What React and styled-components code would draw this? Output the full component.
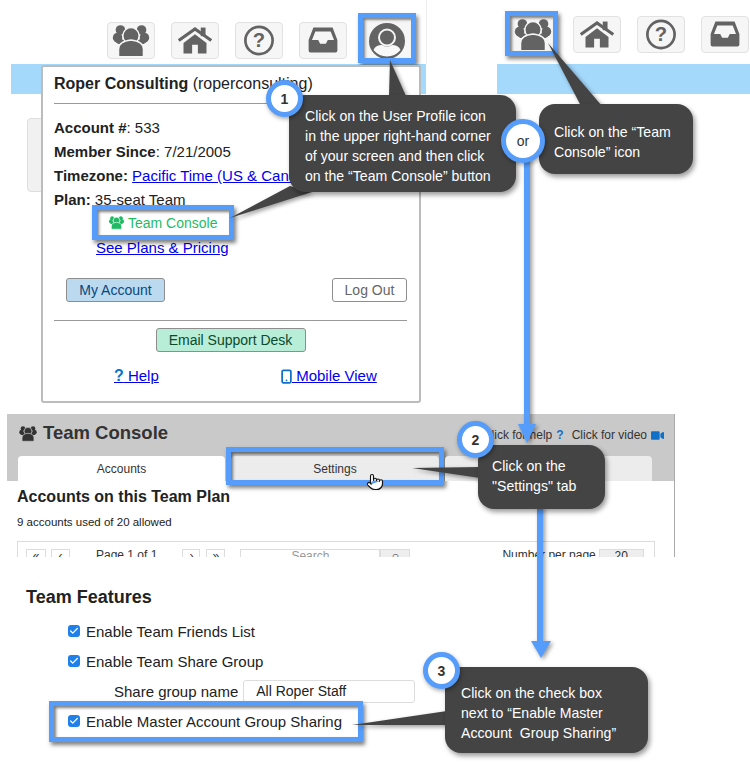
import React from "react";
import styled, { createGlobalStyle } from "styled-components";
import { FaVideo } from "react-icons/fa";
import { Smartphone, Check, Pointer } from "lucide-react";

const BLUE = "#559cfb";
const DARK = "#444444";
const ICON = "#636363";

const Global = createGlobalStyle`
  html, body { margin: 0; padding: 0; background: #fff; }
  body { font-family: "Liberation Sans", Arial, sans-serif; color: #222; }
`;

const Canvas = styled.div`
  position: relative;
  width: 750px;
  height: 764px;
  overflow: hidden;
  background: #fff;
`;
const TopRow = styled.div`
  display: grid;
  grid-template-columns: 497px 253px;
  height: 414px;
`;
const LeftScreen = styled.div`
  position: relative;
`;
const RightScreen = styled.div``;
const Toolbar = styled.div`
  display: flex;
  gap: 16px;
  box-sizing: border-box;
  height: 64px;
  width: ${(p) => p.$width};
  padding: ${(p) => p.$padding};
  border-right: ${(p) => (p.$edge ? "1px solid #ececec" : "none")};
`;
const IconButton = styled.div`
  position: relative;
  box-sizing: border-box;
  width: 48px;
  height: 37px;
  display: flex;
  align-items: center;
  justify-content: center;
  background: #f6f6f6;
  border: 1px solid ${(p) => (p.$plain ? "transparent" : "#e2e2e2")};
  border-radius: 4px;
`;
const Ring = styled.div`
  position: absolute;
  inset: ${(p) => p.$inset};
  border: 5px solid ${BLUE};
  box-shadow: 2px 3px 4px rgba(0, 0, 0, 0.5), inset 2px 2px 3px rgba(0, 0, 0, 0.5);
  pointer-events: none;
`;
const Bar = styled.div`
  height: 30px;
  margin-left: ${(p) => p.$left};
  width: ${(p) => p.$width};
  background: #a4d9fc;
`;
const GhostTab = styled.div`
  box-sizing: border-box;
  width: 40px;
  height: 74px;
  margin: 24px 0 0 27px;
  background: #f1f1f1;
  border: 1px solid #dedede;
  border-radius: 4px;
`;
const Popup = styled.div`
  position: absolute;
  left: 41px;
  top: 65px;
  box-sizing: border-box;
  width: 380px;
  height: 338px;
  padding: 7px 12px 0 11px;
  background: #fff;
  border: 2px solid #bcbcbc;
  border-radius: 3px;
  font-size: 15px;
`;
const PopupTitle = styled.div`
  font-size: 16px;
  line-height: 20px;
  white-space: nowrap;
  b { font-weight: 700; }
`;
const Rule = styled.hr`
  margin: ${(p) => p.$margin};
  border: 0;
  border-top: 1px solid #999;
  height: 0;
`;
const InfoRow = styled.div`
  line-height: 24px;
  white-space: nowrap;
  b { font-weight: 700; }
`;
const Link = styled.a`
  color: #0000ee;
  text-decoration: underline;
`;
const ConsoleButton = styled.div`
  position: relative;
  box-sizing: border-box;
  width: 132px;
  height: 25px;
  margin: -2px 0 0 43px;
  display: flex;
  align-items: center;
  gap: 2px;
  padding-left: 10px;
  background: #fff;
  color: #1fbb64;
  font-size: 14px;
`;
const PlansRow = styled.div`
  line-height: 24px;
  margin: 1px 0 0 42px;
`;
const ActionRow = styled.div`
  display: flex;
  justify-content: space-between;
  margin: 18px 0 0 12px;
`;
const ActionButton = styled.div`
  box-sizing: border-box;
  height: 24px;
  width: ${(p) => p.$width};
  display: flex;
  align-items: center;
  justify-content: center;
  border: 1px solid #8e8e8e;
  border-radius: 3px;
  background: ${(p) => p.$bg};
  color: ${(p) => p.$color};
  font-size: 14px;
`;
const SupportRow = styled.div`
  display: flex;
  justify-content: center;
`;
const LinkRow = styled.div`
  display: flex;
  margin: 12px 0 0 60px;
  line-height: 24px;
`;
const HelpLink = styled(Link)`
  width: 168px;
  flex: none;
  display: block;
  white-space: pre;
`;
const MobileLink = styled(Link)`
  display: flex;
  align-items: center;
  white-space: pre;
  svg { margin: 0 -2px 0 -3px; }
`;
const HelpMark = styled.b`
  color: #1070c8;
  font-size: 16px;
`;
const Console = styled.div`
  box-sizing: border-box;
  width: 668px;
  height: 143px;
  margin-left: 7px;
  border-right: 1px solid #aaa;
  overflow: hidden;
`;
const ConsoleHead = styled.div`
  height: 67px;
  background: #c9c9c9;
  padding-left: 10px;
  box-sizing: border-box;
`;
const HeadLine = styled.div`
  box-sizing: border-box;
  display: flex;
  align-items: center;
  height: 42px;
  padding: 0 10px 4px 0;
  gap: 4px;
`;
const ConsoleTitle = styled.div`
  font-size: 18.5px;
  font-weight: 700;
  color: #333;
`;
const HeadLinks = styled.div`
  margin-left: auto;
  display: flex;
  align-items: center;
  gap: 4px;
  font-size: 12px;
  color: #333;
  padding-top: 4px;
`;
const HeadQ = styled.b`
  color: #1070c8;
  margin-right: 4px;
  font-size: 12px;
`;
const Tabs = styled.div`
  display: flex;
  gap: 6px;
  margin-left: 1px;
`;
const Tab = styled.div`
  position: relative;
  box-sizing: border-box;
  width: ${(p) => p.$width};
  height: 25px;
  display: flex;
  align-items: center;
  justify-content: center;
  background: ${(p) => (p.$active ? "#fff" : "#ececec")};
  border-radius: 4px 4px 0 0;
  font-size: 12px;
  color: #333;
`;
const Cursor = styled.div`
  position: absolute;
  right: 55px;
  top: 17px;
  line-height: 0;
`;
const ConsoleBody = styled.div`
  padding: 7px 0 0 10px;
  background: #fff;
`;
const BodyTitle = styled.div`
  font-size: 16px;
  line-height: 18px;
  font-weight: 700;
  color: #222;
`;
const BodyNote = styled.div`
  font-size: 11.5px;
  line-height: 14px;
  margin-top: 9px;
  color: #222;
`;
const Pager = styled.div`
  box-sizing: border-box;
  width: 638px;
  height: 30px;
  margin-top: 12px;
  padding: 7px 8px 0;
  border: 1px solid #dcdcdc;
  display: flex;
  font-size: 12px;
  color: #333;
`;
const PageBtn = styled.div`
  box-sizing: border-box;
  width: ${(p) => p.$width};
  height: 22px;
  margin-left: ${(p) => p.$left};
  border: 1px solid #ddd;
  display: flex;
  justify-content: center;
  line-height: 12px;
  flex: none;
  white-space: nowrap;
  color: ${(p) => p.$color || "#333"};
  background: ${(p) => p.$bg || "#fff"};
`;
const PageText = styled.div`
  margin-left: ${(p) => p.$left};
  line-height: 13px;
  white-space: nowrap;
  flex: none;
`;
const Features = styled.section`
  padding: 30px 0 0 26px;
`;
const FeaturesTitle = styled.h2`
  margin: 0 0 9px;
  font-size: 18px;
  line-height: 20px;
  font-weight: 700;
  color: #222;
`;
const FeatureRow = styled.div`
  position: relative;
  box-sizing: border-box;
  width: 347px;
  height: 30px;
  margin-left: 42px;
  display: flex;
  align-items: center;
  gap: 6px;
  padding-left: ${(p) => p.$indent || "0"};
  font-size: 15px;
  color: #222;
  white-space: nowrap;
`;
const CheckBox = styled.span`
  width: 12px;
  height: 12px;
  border-radius: 3px;
  background: #1f80ea;
  display: flex;
  align-items: center;
  justify-content: center;
  color: #fff;
  flex: none;
`;
const TextBox = styled.div`
  box-sizing: border-box;
  width: 172px;
  height: 23px;
  margin-left: -1px;
  padding-left: 12px;
  display: flex;
  align-items: center;
  background: #fff;
  border: 1px solid #ddd;
  border-radius: 3px;
  font-size: 14px;
`;
const Overlay = styled.svg`
  position: absolute;
  left: 0;
  top: 0;
  pointer-events: none;
  filter: drop-shadow(2px 2px 2px rgba(0, 0, 0, 0.4));
`;
const Callout = styled.div`
  position: absolute;
  left: ${(p) => p.$x}px;
  top: ${(p) => p.$y}px;
  width: ${(p) => p.$w}px;
  height: ${(p) => p.$h}px;
  box-sizing: border-box;
  padding: ${(p) => p.$pad};
  background: ${DARK};
  border-radius: 16px;
  color: #fff;
  font-size: 14.1px;
  line-height: 20px;
  white-space: pre;
  box-shadow: 2px 3px 5px rgba(0, 0, 0, 0.4);
`;
const Badge = styled.div`
  position: absolute;
  left: ${(p) => p.$x}px;
  top: ${(p) => p.$y}px;
  width: ${(p) => p.$size}px;
  height: ${(p) => p.$size}px;
  box-sizing: border-box;
  display: flex;
  align-items: center;
  justify-content: center;
  background: #fff;
  border: 5px solid ${BLUE};
  border-radius: 50%;
  color: #333;
  font-size: 14px;
  font-weight: ${(p) => p.$weight || 700};
  box-shadow: 1px 2px 4px rgba(0, 0, 0, 0.35);
`;

const TeamIcon = ({ width = 48, height = 37, color = ICON, gap = "#f6f6f6" }) => (
  <svg width={width} height={height} viewBox="0 2 48 34" fill={color}>
    <circle cx="13" cy="8" r="5" />
    <circle cx="35" cy="8" r="5" />
    <circle cx="10" cy="16" r="5" />
    <circle cx="38" cy="16" r="5" />
    <path d="M7 18h34v2q-3 3-7 3H14q-4 0-7-3z" />
    <circle cx="24" cy="14" r="8.5" stroke={gap} strokeWidth="1.5" />
    <path d="M11 35v-7q0-8 13-9.500q13 1.500 13 9.500v7q0 1-2 1H13q-2 0-2-1z" stroke={gap} strokeWidth="1.5" />
  </svg>
);
const HomeIcon = () => (
  <svg width="48" height="37" viewBox="0 0 48 37" fill={ICON}>
    <rect x="30" y="5" width="5" height="9" />
    <path d="M7 18.500L24 6.500L41 18.500" fill="none" stroke={ICON} strokeWidth="3.200" />
    <path d="M12 21L24 12L36 21V32H27V23H21V32H12z" />
  </svg>
);
const HelpIcon = () => (
  <svg width="48" height="37" viewBox="0 0 48 37">
    <circle cx="24" cy="18.500" r="14.200" fill="none" stroke={ICON} strokeWidth="2.800" />
    <text x="24" y="25.500" textAnchor="middle" fontSize="21" fontWeight="700" fontFamily="Liberation Sans" fill={ICON}>?</text>
  </svg>
);
const TrayIcon = () => (
  <svg width="48" height="37" viewBox="0 0 48 37">
    <path
      fillRule="evenodd"
      fill={ICON}
      d="M14 5H34L39 18V29a2 2 0 0 1-2 2H11a2 2 0 0 1-2-2V18zM16 9L12.500 18H19L21 22H27L29 18H35.500L32 9z"
    />
  </svg>
);
const UserIcon = () => (
  <svg width="42" height="42" viewBox="0 0 42 42">
    <circle cx="21" cy="21" r="18" fill={ICON} />
    <circle cx="21" cy="17.500" r="8" fill={ICON} stroke="#f4f4f4" strokeWidth="2" />
    <path d="M7.500 30Q9.500 25 16 25Q21 28 26 25Q32.500 25 34.500 30Q29 36.500 21 36.500Q13 36.500 7.500 30z" fill="#f8f8f8" />
  </svg>
);

const Connectors = () => (
  <Overlay width="750" height="764" viewBox="0 0 750 764">
    <g fill={DARK}>
      <polygon points="390,60 389,96 406,96" />
      <polygon points="230,218 290,186 312,192" />
      <polygon points="548,43 581,106 602,106" />
      <polygon points="412,468 480,467 480,478" />
      <polygon points="352,725 447,711 447,725" />
    </g>
    <g fill={BLUE}>
      <rect x="524" y="158" width="6" height="270" />
      <polygon points="518,424 536,424 527,443" />
      <rect x="537" y="505" width="6" height="138" />
      <polygon points="531,641 551,641 541,658" />
    </g>
  </Overlay>
);

export default function App() {
  return (
    <Canvas>
      <Global />
      <TopRow>
        <LeftScreen>
          <Toolbar $width="427px" $padding="22px 0 0 107px" $edge>
            <IconButton><TeamIcon /></IconButton>
            <IconButton><HomeIcon /></IconButton>
            <IconButton><HelpIcon /></IconButton>
            <IconButton><TrayIcon /></IconButton>
            <IconButton $plain>
              <UserIcon />
              <Ring $inset="-10px -6px -5px -6px" />
            </IconButton>
          </Toolbar>
          <Bar $left="11px" $width="415px" />
          <GhostTab />
          <Popup>
            <PopupTitle><b>Roper Consulting</b> (roperconsulting)</PopupTitle>
            <Rule $margin="9px 0 12px" />
            <InfoRow><b>Account #</b>: 533</InfoRow>
            <InfoRow><b>Member Since</b>: 7/21/2005</InfoRow>
            <InfoRow><b>Timezone:</b> <Link>Pacific Time (US &amp; Canada)</Link></InfoRow>
            <InfoRow><b>Plan:</b> 35-seat Team</InfoRow>
            <ConsoleButton>
              <TeamIcon width={19} height={15} color="#1fbb64" gap="#fff" />
              Team Console
              <Ring $inset="-5px" />
            </ConsoleButton>
            <PlansRow><Link>See Plans &amp; Pricing</Link></PlansRow>
            <ActionRow>
              <ActionButton $width="99px" $bg="#bbdaf0" $color="#08487c">My Account</ActionButton>
              <ActionButton $width="75px" $bg="#fff" $color="#666">Log Out</ActionButton>
            </ActionRow>
            <Rule $margin="18px 0 7px" />
            <SupportRow>
              <ActionButton $width="150px" $bg="#b8eed8" $color="#0b4a2c">Email Support Desk</ActionButton>
            </SupportRow>
            <LinkRow>
              <HelpLink><HelpMark>?</HelpMark> Help</HelpLink>
              <MobileLink><Smartphone size={15} strokeWidth={2.800} color="#1070c8" /> Mobile View</MobileLink>
            </LinkRow>
          </Popup>
        </LeftScreen>
        <RightScreen>
          <Toolbar $width="253px" $padding="16px 0 0 12px">
            <IconButton $plain>
              <TeamIcon />
              <Ring $inset="-6px -2px -4px -5px" />
            </IconButton>
            <IconButton><HomeIcon /></IconButton>
            <IconButton><HelpIcon /></IconButton>
            <IconButton><TrayIcon /></IconButton>
          </Toolbar>
          <Bar $left="0" $width="253px" />
        </RightScreen>
      </TopRow>

      <Console>
        <ConsoleHead>
          <HeadLine>
            <TeamIcon width={22} height={19} color="#333" gap="#c9c9c9" />
            <ConsoleTitle>Team Console</ConsoleTitle>
            <HeadLinks>
              Click for help <HeadQ>?</HeadQ> Click for video <FaVideo size={13} color="#1070c8" />
            </HeadLinks>
          </HeadLine>
          <Tabs>
            <Tab $width="207px" $active>Accounts</Tab>
            <Tab $width="208px">
              Settings
              <Ring $inset="-9px -5px -4px -5px" />
              <Cursor><Pointer size={18} fill="#fff" color="#111" strokeWidth={1.500} /></Cursor>
            </Tab>
            <Tab $width="207px" />
          </Tabs>
        </ConsoleHead>
        <ConsoleBody>
          <BodyTitle>Accounts on this Team Plan</BodyTitle>
          <BodyNote>9 accounts used of 20 allowed</BodyNote>
          <Pager>
            <PageBtn $width="20px">«</PageBtn>
            <PageBtn $width="19px" $left="5px">‹</PageBtn>
            <PageText $left="26px">Page 1 of 1</PageText>
            <PageBtn $width="18px" $left="25px">›</PageBtn>
            <PageBtn $width="19px" $left="6px">»</PageBtn>
            <PageBtn $width="140px" $left="15px" $color="#999">Search</PageBtn>
            <PageBtn $width="30px" $bg="#eee">○</PageBtn>
            <PageText $left="92px">Number per page</PageText>
            <PageBtn $width="45px" $left="3px" $bg="#eee">20</PageBtn>
          </Pager>
        </ConsoleBody>
      </Console>

      <Features>
        <FeaturesTitle>Team Features</FeaturesTitle>
        <FeatureRow>
          <CheckBox><Check size={10} strokeWidth={3} /></CheckBox>
          Enable Team Friends List
        </FeatureRow>
        <FeatureRow>
          <CheckBox><Check size={10} strokeWidth={3} /></CheckBox>
          Enable Team Share Group
        </FeatureRow>
        <FeatureRow $indent="46px">
          Share group name
          <TextBox>All Roper Staff</TextBox>
        </FeatureRow>
        <FeatureRow>
          <CheckBox><Check size={10} strokeWidth={3} /></CheckBox>
          Enable Master Account Group Sharing
          <Ring $inset="-5px 52px -6px -19px" />
        </FeatureRow>
      </Features>

      <Connectors />

      <Callout $x={289} $y={95} $w={227} $h={97} $pad="11px 0 0 16px">
        {"Click on the User Profile icon\nin the upper right-hand corner\nof your screen and then click\non the “Team Console” button"}
      </Callout>
      <Callout $x={539} $y={104} $w={154} $h={70} $pad="18px 0 0 15px">
        {"Click on the “Team\nConsole” icon"}
      </Callout>
      <Callout $x={478} $y={445} $w={127} $h={64} $pad="11px 0 0 14px">
        {"Click on the\n\"Settings\" tab"}
      </Callout>
      <Callout $x={445} $y={667} $w={203} $h={86} $pad="16px 0 0 16px">
        {"Click on the check box\nnext to “Enable Master\nAccount  Group Sharing”"}
      </Callout>

      <Badge $x={266} $y={80} $size={37}>1</Badge>
      <Badge $x={501} $y={119} $size={44} $weight={400}>or</Badge>
      <Badge $x={457} $y={421} $size={37}>2</Badge>
      <Badge $x={423} $y={652} $size={37}>3</Badge>
    </Canvas>
  );
}
